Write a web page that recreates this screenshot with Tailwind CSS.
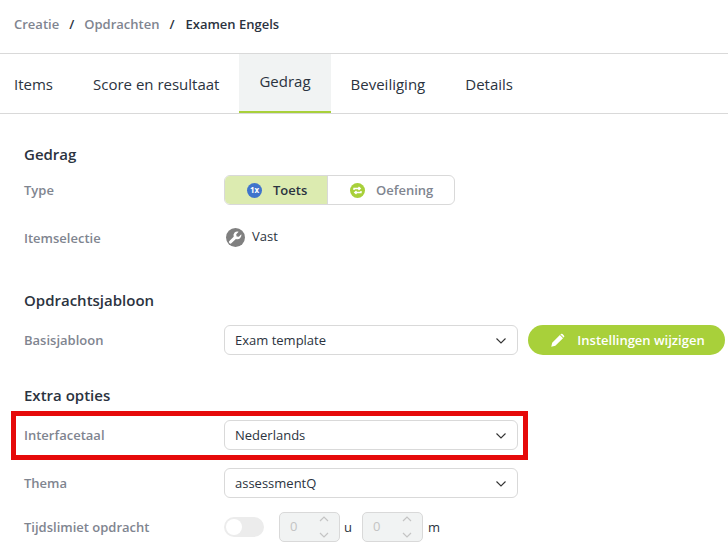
<!DOCTYPE html>
<html lang="nl">
<head>
<meta charset="utf-8">
<script src="https://cdn.jsdelivr.net/npm/@tailwindcss/browser@4"></script>
</head>
<body class="bg-white overflow-hidden font-['Open_Sans',sans-serif] text-[#2b3340]">
<div class="relative w-[728px] h-[551px] overflow-hidden">
  <header class="h-[54px] border-b border-[#d9d9d9] flex items-center pl-[14px] pb-[3px] text-[13px] font-semibold gap-[10px]">
    <span class="text-[#7f8590]">Creatie</span><span>/</span><span class="text-[#7f8590]">Opdrachten</span><span>/</span><span class="ml-[1px]">Examen Engels</span>
  </header>
  <nav class="h-[60px] border-b border-[#d9d9d9] flex text-[15px] pl-[14px]">
    <a class="flex items-center pt-[2px] mr-[40px]">Items</a>
    <a class="flex items-center pt-[2px] mr-[20px]">Score en resultaat</a>
    <a class="flex items-center px-[20px] pb-[3px] bg-[#f1f3f3] border-b-2 border-[#a8d03a]">Gedrag</a>
    <a class="flex items-center pt-[2px] ml-[20px] mr-[40px]">Beveiliging</a>
    <a class="flex items-center pt-[2px]">Details</a>
  </nav>
  <main class="pl-[24px]">
    <h2 class="text-[15px] font-semibold leading-[20px] mt-[30px]">Gedrag</h2>
    <div class="flex items-center h-[30px] mt-[11px]">
      <label class="w-[200px] pt-[2px] text-[13px] font-semibold text-[#7f8590]">Type</label>
      <div class="flex h-[30px] w-[231px] border border-[#d9d9d9] rounded-[6px] overflow-hidden text-[13px] font-semibold">
        <div class="w-[103px] bg-[#dcebb0] border-r border-[#d9d9d9] flex items-center pl-[22px] gap-[11px]">
          <span class="w-[15px] h-[15px] rounded-full bg-[#3f74cc] text-white text-[8px] font-bold flex items-center justify-center">1x</span><span class="pt-[2px]">Toets</span>
        </div>
        <div class="flex-1 flex items-center pl-[22px] gap-[11px] text-[#7f8590]">
          <svg class="w-[15px] h-[15px]" viewBox="0 0 15 15"><circle cx="7.5" cy="7.5" r="7.5" fill="#a8d03a"/><path d="M4 7V5.5h6M8.5 4l1.7 1.5L8.5 7M11 8v1.5H5M6.5 8L4.800 9.500 6.500 11" fill="none" stroke="#fff" stroke-width="1.4"/></svg><span class="pt-[2px]">Oefening</span>
        </div>
      </div>
    </div>
    <div class="flex items-center h-[30px] mt-[18px]">
      <label class="w-[200px] pt-[2px] text-[13px] font-semibold text-[#7f8590]">Itemselectie</label>
      <div class="flex items-center gap-[7px] text-[13px] ml-[2px] -mt-[2px]">
        <svg class="w-[19px] h-[19px]" viewBox="0 0 19 19"><circle cx="9.5" cy="9.5" r="9.5" fill="#808080"/><path d="M15.300 6.300l-2.500 2.500-2.200-.4-.4-2.200 2.500-2.500a3.900 3.900 0 0 0-5 5l-4.300 4.200a1.500 1.500 0 0 0 2.200 2.200l4.300-4.200a3.900 3.900 0 0 0 5.400-4.600z" fill="#fff"/></svg>
        Vast
      </div>
    </div>
    <h2 class="text-[15px] font-semibold leading-[20px] mt-[37px]">Opdrachtsjabloon</h2>
    <div class="flex items-center h-[30px] mt-[15px]">
      <label class="w-[200px] pt-[2px] text-[13px] font-semibold text-[#7f8590]">Basisjabloon</label>
      <div class="w-[294px] h-[30px] border border-[#d9d9d9] rounded-[6px] flex items-center justify-between pt-[2px] pl-[10px] pr-[10px] text-[13px]">Exam template
        <svg class="w-[12px] h-[8px]" viewBox="0 0 12 8"><path d="M1.5 1.5 6 6l4.5-4.500" fill="none" stroke="#333" stroke-width="1.1"/></svg></div>
      <button class="ml-[10px] w-[197px] h-[30px] pl-[2px] rounded-full bg-[#a8d03a] text-white text-[13px] font-semibold flex items-center justify-center gap-[12px]">
        <svg class="w-[15px] h-[15px]" viewBox="0 0 24 24" fill="#fff"><path d="M2 22l1.500-6.500L15.800 3.200l5 5L8.500 20.500zM17.300 1.700a2 2 0 0 1 2.800 0l2.200 2.200a2 2 0 0 1 0 2.800l-.6.6-5-5z"/></svg>
        <span class="pt-[1px]">Instellingen wijzigen</span>
      </button>
    </div>
    <h2 class="text-[15px] font-semibold leading-[20px] mt-[30px]">Extra opties</h2>
    <div class="flex items-center h-[30px] mt-[15px]">
      <label class="w-[200px] pt-[1px] text-[13px] font-semibold text-[#7f8590]">Interfacetaal</label>
      <div class="w-[294px] h-[30px] border border-[#d9d9d9] rounded-[6px] flex items-center justify-between pt-[2px] pl-[10px] pr-[10px] text-[13px]">Nederlands
        <svg class="w-[12px] h-[8px]" viewBox="0 0 12 8"><path d="M1.500 1.500 6 6l4.500-4.500" fill="none" stroke="#333" stroke-width="1.1"/></svg></div>
    </div>
    <div class="flex items-center h-[30px] mt-[18px]">
      <label class="w-[200px] pt-[2px] text-[13px] font-semibold text-[#7f8590]">Thema</label>
      <div class="w-[294px] h-[30px] border border-[#d9d9d9] rounded-[6px] flex items-center justify-between pt-[2px] pl-[10px] pr-[10px] text-[13px]">assessmentQ
        <svg class="w-[12px] h-[8px]" viewBox="0 0 12 8"><path d="M1.500 1.500 6 6l4.500-4.500" fill="none" stroke="#333" stroke-width="1.100"/></svg></div>
    </div>
    <div class="flex items-center h-[30px] mt-[14px]">
      <label class="w-[200px] pt-[2px] text-[13px] font-semibold text-[#7f8590]">Tijdslimiet opdracht</label>
      <span class="relative w-[40px] h-[20px] rounded-full bg-[#ececec]"><span class="absolute left-[2px] top-[2px] w-[16px] h-[16px] rounded-full bg-white"></span></span>
      <div class="ml-[15px] w-[61px] h-[30px] border border-[#d9d9d9] bg-[#f1f3f3] rounded-[5px] flex items-center justify-between pl-[10px] pr-[10px] text-[13px] text-[#c4c4c4]">0
        <svg class="w-[10px] h-[26px]" viewBox="0 0 10 26"><path d="M1 7l4-4 4 4M1 19l4 4 4-4" fill="none" stroke="#c4c4c4" stroke-width="1.200"/></svg></div>
      <span class="ml-[4px] w-[8px] pt-[2px] text-[13px]">u</span>
      <div class="ml-[10px] w-[61px] h-[30px] border border-[#d9d9d9] bg-[#f1f3f3] rounded-[5px] flex items-center justify-between pl-[10px] pr-[10px] text-[13px] text-[#c4c4c4]">0
        <svg class="w-[10px] h-[26px]" viewBox="0 0 10 26"><path d="M1 7l4-4 4 4M1 19l4 4 4-4" fill="none" stroke="#c4c4c4" stroke-width="1.200"/></svg></div>
      <span class="ml-[5px] pt-[2px] text-[13px]">m</span>
    </div>
  </main>
  <div class="absolute left-[11px] top-[411px] w-[517px] h-[49px] border-[5px] border-[#e60a0a]"></div>
</div>
</body>
</html>
